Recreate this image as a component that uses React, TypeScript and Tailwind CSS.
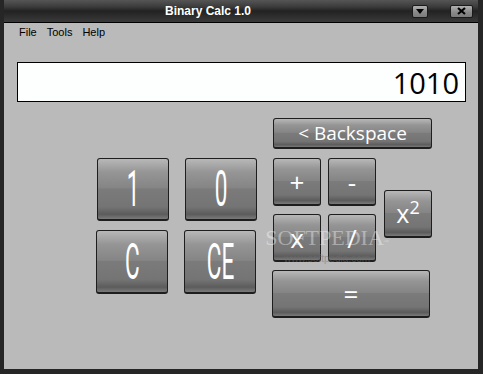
// Binary Calc 1.0 — skinned calculator window

const btnBase =
  'flex items-center justify-center rounded-[3px] border border-[#1e1e1e] border-b-2 text-white ' +
  'bg-[linear-gradient(to_bottom,#b8b8b8_0%,#959595_22%,#858585_48%,#7b7b7b_50%,#747474_80%,#5c5c5c_92%,#7a7a7a_100%)]'

function Btn({ className = '', children }: { className?: string; children: React.ReactNode }) {
  return <div className={`${btnBase} ${className}`}>{children}</div>
}

// tall condensed glyphs used on the digit / clear keys
function Big({ text }: { text: string }) {
  return (
    <span className="inline-block scale-x-[0.45] font-['Roboto','Liberation_Sans',sans-serif] text-[50px] font-normal leading-none">
      {text}
    </span>
  )
}

function Op({ text, size = 'text-[26px]' }: { text: React.ReactNode; size?: string }) {
  return <span className={`font-['Open_Sans','Noto_Sans',sans-serif] leading-none ${size}`}>{text}</span>
}

function TitleButton({ className = '', children }: { className?: string; children: React.ReactNode }) {
  return (
    <div className={`flex h-[13px] items-center justify-center rounded-[2px] border border-[#1a1a1a] bg-[linear-gradient(to_bottom,#b0b0b0,#8a8a8a_55%,#7a7a7a)] ${className}`}>
      {children}
    </div>
  )
}

export default function App() {
  return (
    <div className="flex h-[374px] w-[483px] flex-col overflow-hidden border-b-[5px] border-l-4 border-r-[5px] border-[#262626] bg-[#262626] font-['Liberation_Sans',Arial,sans-serif]">
      {/* title bar */}
      <div className="flex h-[23px] shrink-0 items-center border-b border-black bg-[linear-gradient(to_bottom,#555_0%,#3c3c3c_30%,#222_50%,#2e2e2e_75%,#3a3a3a_100%)]">
        <div className="flex flex-1 justify-center text-[12px] font-bold text-white">Binary Calc 1.0</div>
        <TitleButton className="w-4">
          <svg width="8" height="5" viewBox="0 0 8 5"><path d="M0 0h8L4 5z" fill="#000" /></svg>
        </TitleButton>
        <TitleButton className="ml-[22px] mr-[5px] w-[23px]">
          <svg width="9" height="8" viewBox="0 0 9 8">
            <path d="M1 1l7 6M8 1L1 7" stroke="#000" strokeWidth="2.2" />
          </svg>
        </TitleButton>
      </div>

      {/* client area */}
      <div className="relative flex flex-1 flex-col bg-[#bababa]">
        <div className="flex gap-[10px] pl-[15px] pt-[2px] text-[11px] leading-[14px] text-black">
          <span>File</span>
          <span>Tools</span>
          <span>Help</span>
        </div>

        <div className="ml-[13px] mt-[23px] flex h-[40px] w-[449px] items-center justify-end border border-black bg-[#fcfffe] pr-[6px]">
          <span className="font-['Open_Sans','Noto_Sans',sans-serif] text-[29px] leading-none text-black">1010</span>
        </div>

        <div className="mt-[16px] flex items-start">
          {/* digits + clear */}
          <div className="ml-[92px] mt-[40px] flex w-[161px] flex-col gap-[9px]">
            <div className="flex gap-4 pl-px">
              <Btn className="h-[63px] w-[72px]"><Big text="1" /></Btn>
              <Btn className="h-[63px] w-[72px]"><Big text="0" /></Btn>
            </div>
            <div className="flex gap-4">
              <Btn className="h-16 w-[72px]"><Big text="C" /></Btn>
              <Btn className="h-16 w-[72px]"><Big text="CE" /></Btn>
            </div>
          </div>

          {/* operators */}
          <div className="ml-[15px] flex flex-col">
            <Btn className="ml-px h-[31px] w-[159px]"><Op text="< Backspace" size="text-[19px]" /></Btn>
            <div className="ml-px mt-[9px] flex items-start">
              <div className="grid grid-cols-[48px_48px] gap-x-[7px] gap-y-2">
                <Btn className="h-12"><Op text="+" /></Btn>
                <Btn className="h-12"><Op text="-" /></Btn>
                <Btn className="h-12"><Op text="x" /></Btn>
                <Btn className="h-12"><Op text="/" /></Btn>
              </div>
              <Btn className="ml-2 mt-8 h-12 w-12">
                <Op text={<>x<span className="relative -top-[9px] text-[18px]">2</span></>} size="text-[25px]" />
              </Btn>
            </div>
            <Btn className="mt-2 h-12 w-[158px]"><Op text="=" /></Btn>
          </div>
        </div>

        {/* watermark */}
        <div className="pointer-events-none absolute left-[262px] top-[204px] flex w-[122px] flex-col items-center text-white/40">
          <span className="font-['Liberation_Serif',serif] text-[22px] leading-none">
            SOFTPEDIA<sup className="text-[5px]">™</sup>
          </span>
          <span className="mt-[5px] font-['Liberation_Sans',sans-serif] text-[10px] leading-none text-[#6f6f6f]/50">www.softpedia.com</span>
        </div>
      </div>
    </div>
  )
}
